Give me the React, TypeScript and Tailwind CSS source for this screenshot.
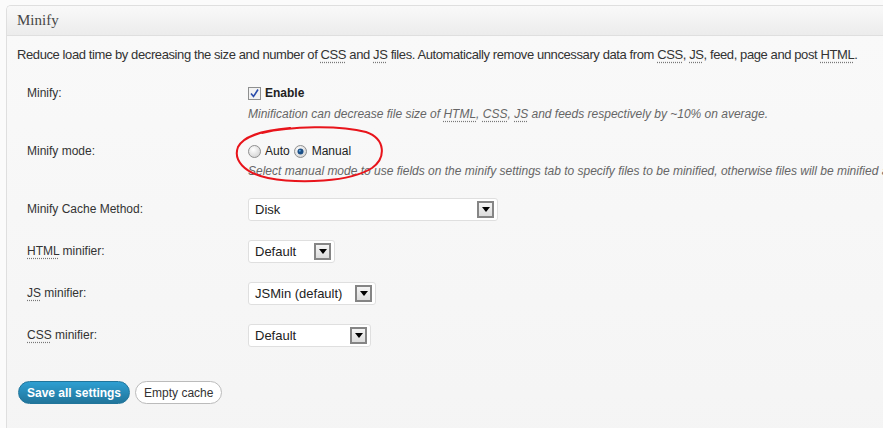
function Abbr({ children }: { children: string }) {
  return <span className="underline decoration-dotted decoration-[#777] underline-offset-[3px]">{children}</span>;
}

function Select({ value, width }: { value: string; width: string }) {
  return (
    <div className={`${width} h-[23px] flex items-center justify-between bg-white border border-[#dfdfdf] rounded-[3px] pl-[6px] pr-[3px] text-[13px] text-[#222]`}>
      <span>{value}</span>
      <div className="w-[17px] h-[17px] border-2 border-[#858585] bg-gradient-to-b from-[#f4f4f4] to-[#dcdcdc] flex items-center justify-center">
        <svg width="8" height="5" viewBox="0 0 8 5">
          <path d="M0 0 H8 L4 5 Z" fill="#000" />
        </svg>
      </div>
    </div>
  );
}

function Radio({ checked }: { checked?: boolean }) {
  return (
    <svg width="13" height="13" viewBox="0 0 13 13" className="shrink-0">
      <defs>
        <radialGradient id={checked ? "rc" : "ru"} cx="0.4" cy="0.35" r="0.7">
          <stop offset="0" stopColor="#ffffff" />
          <stop offset="1" stopColor="#d2d2d2" />
        </radialGradient>
      </defs>
      <circle cx="6.5" cy="6.5" r="6" fill={`url(#${checked ? "rc" : "ru"})`} stroke="#8f8f8f" />
      {checked && <circle cx="6.5" cy="6.5" r="3" fill="#1d4f86" />}
      {checked && <circle cx="5.8" cy="5.8" r="1" fill="#5fa6de" />}
    </svg>
  );
}

function SelectRow({ label, children }: { label: React.ReactNode; children: React.ReactNode }) {
  return (
    <div className="flex items-center mt-[19px]">
      <div className="w-[221px] shrink-0 text-[12px] text-[#333] pb-[2px]">{label}</div>
      {children}
    </div>
  );
}

export default function App() {
  return (
    <div
      className="relative w-[883px] h-[428px] overflow-hidden bg-[#fbfbfb] pt-[5px] pl-[6px]"
      style={{ fontFamily: '"Liberation Sans", Arial, sans-serif' }}
    >
      <div className="h-[450px] border border-r-0 border-[#dfdfdf] rounded-tl-[5px] bg-[#f4f4f4] overflow-hidden">
        <div className="h-[30px] bg-gradient-to-b from-[#f9f9f9] to-[#ececec] border-b border-[#dfdfdf] px-[10px] flex items-center">
          <h3 className="text-[15px] text-[#464646]" style={{ fontFamily: '"Liberation Serif", Georgia, serif' }}>
            Minify
          </h3>
        </div>
        <div className="px-[10px] h-full bg-gradient-to-b from-[#f9f9f9] to-[#f4f4f4]">
          <p className="pt-[10px] text-[13px] leading-[17px] text-[#333] whitespace-nowrap tracking-[-0.4px]">
            Reduce load time by decreasing the size and number of <Abbr>CSS</Abbr> and <Abbr>JS</Abbr> files. Automatically
            remove unncessary data from <Abbr>CSS</Abbr>, <Abbr>JS</Abbr>, feed, page and post <Abbr>HTML</Abbr>.
          </p>

          <div className="ml-[10px]">
            <div className="flex mt-[22px]">
              <div className="w-[221px] shrink-0 text-[12px] leading-[16px] text-[#333]">Minify:</div>
              <div>
                <div className="flex items-center h-[16px] gap-[4px]">
                  <svg width="13" height="13" viewBox="0 0 13 13">
                    <rect x="0.5" y="0.5" width="12" height="12" fill="#f2f2f2" stroke="#8e8f8f" />
                    <path d="M3 6.5 L5.5 9.5 L10 2.5" fill="none" stroke="#2a4cab" strokeWidth="1.6" />
                  </svg>
                  <span className="text-[12px] font-bold text-[#222]">Enable</span>
                </div>
                <div className="mt-[5px] text-[12px] leading-[16px] italic text-[#666] whitespace-nowrap">
                  Minification can decrease file size of <Abbr>HTML</Abbr>, <Abbr>CSS</Abbr>, <Abbr>JS</Abbr> and feeds
                  respectively by ~10% on average.
                </div>
              </div>
            </div>

            <div className="flex mt-[21px]">
              <div className="w-[221px] shrink-0 text-[12px] leading-[16px] text-[#333]">Minify mode:</div>
              <div>
                <div className="flex items-center h-[16px] text-[12px] text-[#222]">
                  <Radio />
                  <span className="ml-[4px]">Auto</span>
                  <span className="ml-[4px] flex"><Radio checked /></span>
                  <span className="ml-[5px]">Manual</span>
                </div>
                <div className="mt-[4px] text-[12px] leading-[16px] italic text-[#666] whitespace-nowrap">
                  Select manual mode to use fields on the minify settings tab to specify files to be minified, otherwise files
                  will be minified automatically.
                </div>
              </div>
            </div>

            <SelectRow label="Minify Cache Method:">
              <Select value="Disk" width="w-[250px]" />
            </SelectRow>
            <SelectRow label={<><Abbr>HTML</Abbr> minifier:</>}>
              <Select value="Default" width="w-[87px]" />
            </SelectRow>
            <SelectRow label={<><Abbr>JS</Abbr> minifier:</>}>
              <Select value="JSMin (default)" width="w-[128px]" />
            </SelectRow>
            <SelectRow label={<><Abbr>CSS</Abbr> minifier:</>}>
              <Select value="Default" width="w-[123px]" />
            </SelectRow>
          </div>

          <div className="flex gap-[5px] mt-[34px] ml-px">
            <button className="h-[23px] px-[8px] rounded-full bg-gradient-to-b from-[#2e9fd2] to-[#21759b] border border-[#21759b] text-white text-[12px] font-bold">
              Save all settings
            </button>
            <button className="h-[23px] px-[8px] rounded-full bg-white border border-[#bbb] text-[#333] text-[12px]">
              Empty cache
            </button>
          </div>
        </div>
      </div>

      <svg className="absolute left-0 top-0 pointer-events-none" width="883" height="428" viewBox="0 0 883 428">
        <path
          d="M262 133 C 290 126, 340 125, 366 132 C 386 139, 386 158, 372 168 C 350 182, 300 184, 268 178 C 244 173, 233 160, 238 147 C 243 137, 258 131, 290 128"
          fill="none"
          stroke="#e8141b"
          strokeWidth="2"
          strokeLinecap="round"
        />
      </svg>
    </div>
  );
}
